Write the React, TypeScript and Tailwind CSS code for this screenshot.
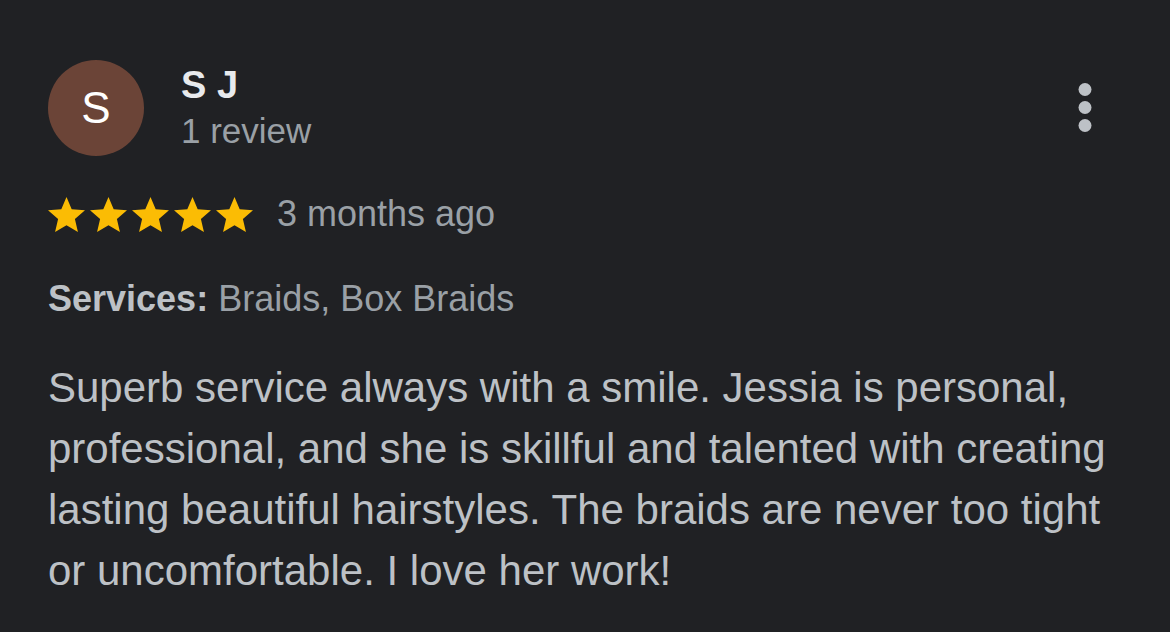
const Star = () => (
  <svg width="37" height="35" viewBox="2 2 20 19" preserveAspectRatio="none" className="shrink-0">
    <path
      fill="#fbbc04"
      d="M12 17.27L18.18 21l-1.64-7.03L22 9.24l-7.19-.61L12 2 9.19 8.63 2 9.24l5.46 4.73L5.82 21z"
    />
  </svg>
)

export default function App() {
  return (
    <div
      className="min-h-[632px] w-[1170px] bg-[#202124] pl-[48px] pr-[40px] pt-[60px]"
      style={{ fontFamily: '"Liberation Sans", Arial, sans-serif' }}
    >
      {/* header */}
      <div className="flex items-start">
        <div className="flex h-[96px] w-[96px] shrink-0 items-center justify-center rounded-full bg-[#6b4437] text-[44px] text-white">
          S
        </div>
        <div className="ml-[37px] flex flex-1 flex-col pt-[3px]">
          <span className="text-[38px] font-bold leading-[44px] text-[#e8eaed]">S J</span>
          <span className="mt-[2px] text-[35px] leading-[44px] text-[#9aa0a6]">1 review</span>
        </div>
        {/* overflow menu */}
        <button type="button" className="mr-[38px] mt-[23px] flex w-[14px] shrink-0">
          <svg width="14" height="50" viewBox="0 0 14 50">
            <circle cx="7" cy="6.5" r="6.5" fill="#bdc1c6" />
            <circle cx="7" cy="24.5" r="6.5" fill="#bdc1c6" />
            <circle cx="7" cy="42.5" r="6.5" fill="#bdc1c6" />
          </svg>
        </button>
      </div>

      {/* rating */}
      <div className="mt-[38px] flex items-center">
        <div className="flex gap-[5px]">
          <Star />
          <Star />
          <Star />
          <Star />
          <Star />
        </div>
        <span className="ml-[24px] text-[36px] leading-[40px] text-[#9aa0a6]">3 months ago</span>
      </div>

      {/* services */}
      <p className="mt-[43px] text-[36px] leading-[44px] text-[#9aa0a6]">
        <span className="font-bold text-[#bdc1c6]">Services:</span> Braids, Box Braids
      </p>

      {/* review body */}
      <p className="mt-[36px] text-[42px] leading-[61px] text-[#bdc1c6]">
        Superb service always with a smile. Jessia is personal, professional, and she is skillful and talented with
        creating lasting beautiful hairstyles. The braids are never too tight or uncomfortable. I love her work!
      </p>
    </div>
  )
}
